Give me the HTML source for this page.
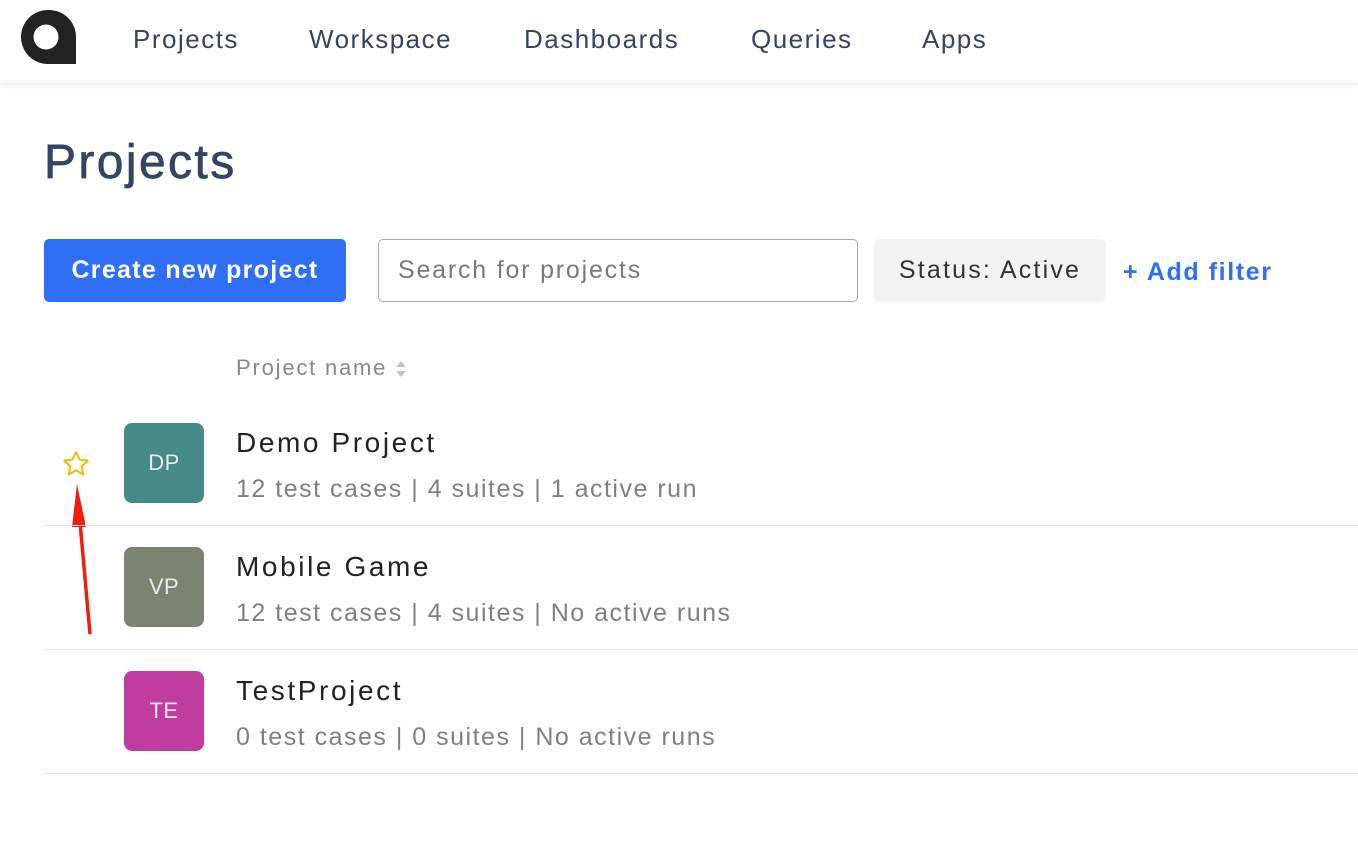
<!DOCTYPE html>
<html><head><meta charset="utf-8"><style>
*{margin:0;padding:0;box-sizing:border-box}
body{width:1358px;height:846px;background:#fff;font-family:"Liberation Sans",sans-serif;position:relative;overflow:hidden;letter-spacing:1.6px}
.nav{position:absolute;left:0;top:0;width:1358px;height:84px;background:#fff;border-bottom:1px solid #ececec;box-shadow:0 2px 5px rgba(0,0,0,0.06)}
.nav a{position:absolute;top:24px;font-size:26px;color:#344563;text-decoration:none;letter-spacing:1.5px}
.abs{position:absolute}
h1{position:absolute;left:44px;top:135px;font-size:48px;font-weight:normal;color:#344563;letter-spacing:2.4px;-webkit-text-stroke:0.7px #344563}
.btn{left:44px;top:239px;width:302px;height:63px;background:#2f6ff5;border-radius:5px;color:#fff;font-size:25px;font-weight:bold;display:flex;align-items:center;justify-content:center;letter-spacing:1.3px}
.search{left:378px;top:239px;width:480px;height:63px;border:1.5px solid #a8a8a8;border-radius:5px;color:#7a7a7a;font-size:25px;padding:16px 19px;letter-spacing:1.8px}
.status{left:874px;top:239px;width:232px;height:63px;background:#f2f2f2;border-radius:6px;font-size:25px;color:#333;display:flex;align-items:center;justify-content:center;letter-spacing:2.2px}
.add{left:1123px;top:258px;font-size:25px;font-weight:bold;color:#2f6ff5;letter-spacing:1.6px}
.th{left:236px;top:355px;font-size:22px;color:#888;letter-spacing:1.8px}
.av{width:80px;height:80px;border-radius:8px;color:#eaeaea;font-size:22px;display:flex;align-items:center;justify-content:center;left:124px;letter-spacing:0.5px}
.name{left:236px;font-size:28px;color:#222;letter-spacing:2.6px}
.meta{left:236px;font-size:25px;color:#808080;letter-spacing:1.5px}
.line{left:44px;width:1314px;height:1px;background:#e2e2e2}
</style></head><body>
<div class="nav">
<svg class="abs" style="left:0;top:0" width="90" height="80" viewBox="0 0 90 80"><path d="M48 10A27 27 0 1 0 48 64L76 64L76 37A27 27 0 0 0 48 10z" fill="#222"/><circle cx="46" cy="37" r="12.5" fill="#fff"/></svg>
<a style="left:133px">Projects</a><a style="left:309px">Workspace</a><a style="left:524px">Dashboards</a><a style="left:751px">Queries</a><a style="left:922px">Apps</a>
</div>
<h1>Projects</h1>
<div class="abs btn">Create new project</div>
<div class="abs search">Search for projects</div>
<div class="abs status">Status: Active</div>
<div class="abs add">+ Add filter</div>
<div class="abs th">Project name</div>
<svg class="abs" style="left:395px;top:359px" width="12" height="20" viewBox="0 0 12 20"><path d="M1 8L6 2L11 8z M1 12L6 18L11 12z" fill="#c4c4c4"/></svg>

<svg class="abs" style="left:60px;top:449px" width="32" height="30" viewBox="0 0 24 24"><path d="M12 2.5l2.9 6 6.5.8-4.8 4.5 1.2 6.5L12 17.1l-5.8 3.2 1.2-6.5L2.6 9.3l6.5-.8z" fill="none" stroke="#f5b800" stroke-width="1.6" stroke-linejoin="round"/></svg>
<svg class="abs" style="left:66px;top:482px" width="30" height="155" viewBox="0 0 30 155"><path d="M6 45L11 2L20 45z" fill="#f01c0c"/><path d="M14 40L24 152" stroke="#f01c0c" stroke-width="3.5"/></svg>

<div class="abs av" style="top:423px;background:#468a87">DP</div>
<div class="abs name" style="top:427px">Demo Project</div>
<div class="abs meta" style="top:475px">12 test cases | 4 suites | 1 active run</div>
<div class="abs line" style="top:525px"></div>

<div class="abs av" style="top:547px;background:#7b8470">VP</div>
<div class="abs name" style="top:551px">Mobile Game</div>
<div class="abs meta" style="top:599px">12 test cases | 4 suites | No active runs</div>
<div class="abs line" style="top:649px"></div>

<div class="abs av" style="top:671px;background:#c03c9e">TE</div>
<div class="abs name" style="top:675px">TestProject</div>
<div class="abs meta" style="top:723px">0 test cases | 0 suites | No active runs</div>
<div class="abs line" style="top:773px"></div>
</body></html>
